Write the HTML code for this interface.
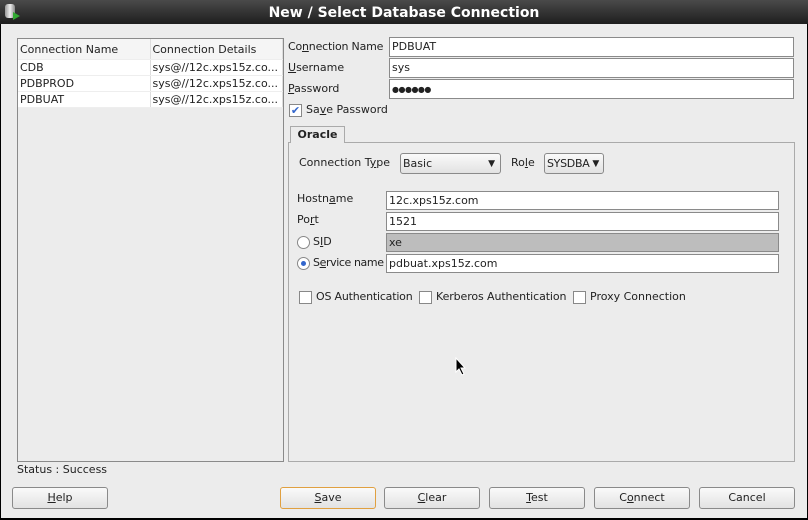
<!DOCTYPE html>
<html><head><style>
*{box-sizing:border-box;margin:0;padding:0}
body{width:808px;height:520px;background:#000;font-family:"DejaVu Sans","Liberation Sans",sans-serif;font-size:11px;color:#222;position:relative;overflow:hidden}
.win{position:absolute;left:1px;top:24px;width:806px;height:494px;background:#ececec}
.title{position:absolute;left:0;top:0;width:808px;height:24px;background:linear-gradient(#4a4a4a,#1e1e1e);color:#fff;font-weight:bold;font-size:14px;text-align:center;line-height:27px}
.a{position:absolute;white-space:nowrap}
.inp{position:absolute;background:#fff;border:1px solid #8a8a8a;padding-left:2px;line-height:17px;white-space:nowrap;overflow:hidden}
.btn{position:absolute;top:487px;height:22px;width:96px;border:1px solid #8a8a8a;border-radius:3px;background:linear-gradient(#fafafa,#e2e2e2);text-align:center;line-height:20px}
.cb{position:absolute;width:13px;height:13px;border:1px solid #888;background:#fff}
.rad{position:absolute;width:13px;height:13px;border:1px solid #888;border-radius:50%;background:#fff}
u{text-decoration:underline}
td{height:16px;padding-left:2px;border-right:1px solid #ddd;border-bottom:1px solid #eee;white-space:nowrap}
</style></head><body>
<div class="title">New / Select Database Connection</div>
<div class="a" style="left:5px;top:4px;width:10px;height:14px;background:linear-gradient(90deg,#999,#eee,#888);border-radius:3px"></div>
<div class="a" style="left:13px;top:12px;width:0;height:0;border-left:7px solid #3a3;border-top:4px solid transparent;border-bottom:4px solid transparent"></div>
<div class="win"></div>
<div class="a" style="left:17px;top:38px;width:267px;height:424px;border:1px solid #8a8a8a;background:#ececec">
<table style="border-collapse:collapse;width:265px;background:#fff;font-size:11px">
<tr style="background:#f5f5f5"><td style="width:132px;height:20px;padding-top:2px">Connection Name</td><td style="height:20px;padding-top:2px">Connection Details</td></tr>
<tr><td>CDB</td><td>sys@//12c.xps15z.co...</td></tr>
<tr><td>PDBPROD</td><td>sys@//12c.xps15z.co...</td></tr>
<tr><td>PDBUAT</td><td>sys@//12c.xps15z.co...</td></tr>
</table></div>
<div class="a" style="left:288px;top:40px;letter-spacing:-0.2px">Co<u>n</u>nection Name</div>
<div class="a" style="left:288px;top:61px"><u>U</u>sername</div>
<div class="a" style="left:288px;top:82px"><u>P</u>assword</div>
<div class="inp" style="left:389px;top:37px;width:405px;height:20px">PDBUAT</div>
<div class="inp" style="left:389px;top:58px;width:405px;height:20px">sys</div>
<div class="inp" style="left:389px;top:79px;width:405px;height:20px;font-size:8px;line-height:19px;letter-spacing:-0.5px">●●●●●●</div>
<div class="cb" style="left:289px;top:104px;color:#36c;font-size:11px;line-height:11px;text-align:center">✔</div>
<div class="a" style="left:306px;top:103px">Sa<u>v</u>e Password</div>
<div class="a" style="left:288px;top:142px;width:507px;height:320px;border:1px solid #aaa"></div>
<div class="a" style="left:290px;top:126px;width:55px;height:17px;border:1px solid #aaa;border-bottom:none;background:#ececec;font-weight:bold;text-align:center;line-height:15px">Oracle</div>
<div class="a" style="left:299px;top:156px">Connection T<u>y</u>pe</div>
<div class="inp" style="left:400px;top:153px;width:101px;height:21px;background:linear-gradient(#fafafa,#e2e2e2);border-radius:3px;line-height:20px">Basic<span style="position:absolute;right:5px;font-size:9px">▼</span></div>
<div class="a" style="left:511px;top:156px">Ro<u>l</u>e</div>
<div class="inp" style="left:544px;top:153px;width:60px;height:21px;background:linear-gradient(#fafafa,#e2e2e2);border-radius:3px;line-height:20px;letter-spacing:-0.3px">SYSDBA<span style="position:absolute;right:4px;font-size:9px">▼</span></div>
<div class="a" style="left:297px;top:192px">Hostn<u>a</u>me</div>
<div class="a" style="left:297px;top:213px">Po<u>r</u>t</div>
<div class="rad" style="left:297px;top:236px"></div><div class="a" style="left:313px;top:235px">S<u>I</u>D</div>
<div class="rad" style="left:297px;top:257px"><div style="position:absolute;left:3px;top:3px;width:5px;height:5px;border-radius:50%;background:#36c"></div></div>
<div class="a" style="left:313px;top:256px;letter-spacing:-0.4px">S<u>e</u>rvice name</div>
<div class="inp" style="left:386px;top:191px;width:393px;height:19px">12c.xps15z.com</div>
<div class="inp" style="left:386px;top:212px;width:393px;height:19px">1521</div>
<div class="inp" style="left:386px;top:233px;width:393px;height:19px;background:#bdbdbd">xe</div>
<div class="inp" style="left:386px;top:254px;width:393px;height:19px">pdbuat.xps15z.com</div>
<div class="cb" style="left:299px;top:291px"></div><div class="a" style="left:316px;top:290px;letter-spacing:-0.2px">OS Authentication</div>
<div class="cb" style="left:419px;top:291px"></div><div class="a" style="left:436px;top:290px;letter-spacing:-0.1px">Kerberos Authentication</div>
<div class="cb" style="left:573px;top:291px"></div><div class="a" style="left:590px;top:290px">Proxy Connection</div>
<div class="a" style="left:17px;top:463px">Status : Success</div>
<div class="btn" style="left:12px"><u>H</u>elp</div>
<div class="btn" style="left:280px;border-color:#e0a040"><u>S</u>ave</div>
<div class="btn" style="left:384px"><u>C</u>lear</div>
<div class="btn" style="left:489px"><u>T</u>est</div>
<div class="btn" style="left:594px">C<u>o</u>nnect</div>
<div class="btn" style="left:699px">Cancel</div>
<svg class="a" style="left:455px;top:357px" width="12" height="20"><path d="M1 1 L1 15 L4 12 L7 18 L9 17 L6 11 L10 11 Z" fill="#000" stroke="#fff" stroke-width="1"/></svg>
</body></html>
